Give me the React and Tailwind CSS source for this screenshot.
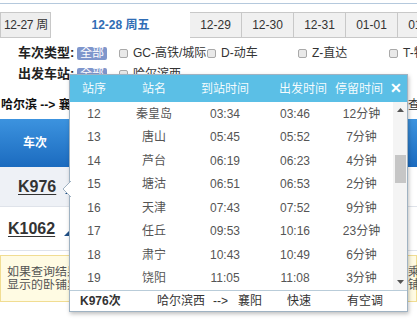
import React from 'react';

const STOPS = [
  ['12', '秦皇岛', '03:34', '03:46', '12分钟'],
  ['13', '唐山', '05:45', '05:52', '7分钟'],
  ['14', '芦台', '06:19', '06:23', '4分钟'],
  ['15', '塘沽', '06:51', '06:53', '2分钟'],
  ['16', '天津', '07:43', '07:52', '9分钟'],
  ['17', '任丘', '09:53', '10:16', '23分钟'],
  ['18', '肃宁', '10:43', '10:49', '6分钟'],
  ['19', '饶阳', '11:05', '11:08', '3分钟'],
];

const TABS = ['12-29', '12-30', '12-31', '01-01', '01-02'];

const Check = () => (
  <span className="inline-block w-[9px] h-[9px] rounded-[2px] border border-[#a9a9a9] bg-[#e9e9e9] shrink-0" />
);

const Option = ({ label, w }) => (
  <div className={`flex items-center gap-[5px] shrink-0 ${w}`}>
    <Check />
    <span className="text-[12px] text-[#333] whitespace-nowrap">{label}</span>
  </div>
);

const Badge = () => (
  <span className="inline-flex items-center justify-center w-[30px] h-[13px] rounded-[2px] bg-[#7f96cc] text-white text-[12px] leading-none shrink-0">
    全部
  </span>
);

const StopPopup = () => (
  <div className="absolute left-[69px] top-[74px] w-[339px] border border-[#9fb2c2] bg-white shadow-[1px_2px_4px_rgba(0,0,0,0.25)]">
    {/* little pointer on the left edge */}
    <svg className="absolute left-[-8px] top-[106px]" width="9" height="16" viewBox="0 0 9 16">
      <path d="M9 0 L1 8 L9 16 Z" fill="#fff" />
      <path d="M9 0 L1 8 L9 16" fill="none" stroke="#9fb2c2" />
    </svg>

    {/* header */}
    <div className="flex items-center h-[27px] bg-[#5bbfe6] text-[12px] text-white/95">
      <div className="w-[48px] text-center">站序</div>
      <div className="w-[72px] text-center">站名</div>
      <div className="w-[70px] text-center">到站时间</div>
      <div className="w-[70px] text-center pl-[16px]">出发时间</div>
      <div className="w-[58px] text-center">停留时间</div>
      <div className="w-[15px] text-center font-bold text-[14px] text-white">✕</div>
    </div>

    {/* body */}
    <div className="flex">
      <div className="w-[323px]">
        {STOPS.map(([no, name, arr, dep, stay]) => (
          <div key={no} className="flex items-center h-[23.5px] text-[12px] text-[#555]">
            <div className="w-[48px] text-center">{no}</div>
            <div className="w-[72px] text-center">{name}</div>
            <div className="w-[70px] text-center">{arr}</div>
            <div className="w-[70px] text-center">{dep}</div>
            <div className="w-[63px] text-center">{stay}</div>
          </div>
        ))}
      </div>
      <div className="w-[14px] bg-[#f4f4f4] flex flex-col items-center">
        <svg className="mt-[6px]" width="7" height="4" viewBox="0 0 7 4">
          <path d="M0 4 L3.5 0 L7 4 Z" fill="#555" />
        </svg>
        <div className="mt-[43px] w-[11px] h-[28px] bg-[#c6c6c6]" />
        <div className="flex-1" />
        <svg className="mb-[6px]" width="7" height="4" viewBox="0 0 7 4">
          <path d="M0 0 L3.5 4 L7 0 Z" fill="#555" />
        </svg>
      </div>
    </div>

    {/* footer */}
    <div className="flex items-center h-[21px] border-t border-[#b9ccd9] text-[12px] text-[#333] pl-[10px] whitespace-nowrap">
      <span className="w-[77px] font-bold">K976次</span>
      <span className="w-[56px]">哈尔滨西</span>
      <span className="w-[25px]">--&gt;</span>
      <span className="w-[49px]">襄阳</span>
      <span className="w-[60px]">快速</span>
      <span>有空调</span>
    </div>
  </div>
);

const TrainRow = ({ code, bg, pad, h }) => (
  <div className={`flex ${h} border-b border-[#dfe3ea]`}>
    <div className={`w-[70px] shrink-0 flex items-center ${bg} ${pad}`}>
      <span className="font-['Liberation_Sans',sans-serif] font-bold text-[16px] text-[#333] underline underline-offset-2">{code}</span>
      <svg className="ml-[9px] mt-[10px]" width="5" height="5" viewBox="0 0 5 5">
        <path d="M5 0 L5 5 L0 5 Z" fill="#1f4f86" />
      </svg>
    </div>
    <div className="flex-1 bg-white" />
  </div>
);

export default function App() {
  return (
    <div className="relative w-[417px] h-[326px] overflow-hidden bg-white font-['Liberation_Sans','Noto_Sans_CJK_SC',sans-serif] text-[#333]">
      <div className="h-[3px]" />
      <div className="h-px bg-[#b5c9dd]" />
      <div className="h-[8px]" />

      {/* date tabs */}
      <div className="flex h-[26px] text-[12px] whitespace-nowrap">
        <div className="w-[51px] shrink-0 bg-[#eeeeee] border border-[#c8c8c8] pl-[3px] flex items-center overflow-hidden tracking-[-0.3px]">12-27 周</div>
        <div className="w-[139px] shrink-0 bg-white flex items-center justify-center font-bold text-[#2f6db5]">12-28 周五</div>
        {TABS.map((t) => (
          <div key={t} className="w-[52px] shrink-0 bg-[#f0f0f0] border border-[#c8c8c8] border-l-0 first:border-l flex items-center justify-center">
            {t}
          </div>
        ))}
      </div>

      {/* filters */}
      <div className="pt-[8px] pl-[18px]">
        <div className="flex items-center h-[14px]">
          <span className="w-[59px] font-bold text-[13px] text-[#222] shrink-0">车次类型:</span>
          <Badge />
          <div className="w-[12px] shrink-0" />
          <Option label="GC-高铁/城际" w="w-[88px]" />
          <Option label="D-动车" w="w-[91px]" />
          <Option label="Z-直达" w="w-[91px]" />
          <Option label="T-特快" w="w-[60px]" />
        </div>
        <div className="flex items-center h-[14px] mt-[7px]">
          <span className="w-[59px] font-bold text-[13px] text-[#222] shrink-0">出发车站:</span>
          <Badge />
          <div className="w-[12px] shrink-0" />
          <Option label="哈尔滨西" w="w-[88px]" />
        </div>
      </div>

      {/* route line */}
      <div className="mt-[15px] flex items-center h-[18px] text-[12px] whitespace-nowrap">
        <div className="w-[408px] shrink-0 pl-[1px] font-bold text-[#111] overflow-hidden">哈尔滨 --&gt; 襄阳（12月28日 周五）共计2个车次</div>
        <div className="text-[#333]">查询</div>
      </div>

      {/* table header */}
      <div className="mt-[5px] flex h-[48px] bg-gradient-to-b from-[#3c93df] to-[#1b6bbf] text-white font-bold text-[12px]">
        <div className="w-[70px] flex items-center justify-center">车次</div>
      </div>

      <TrainRow code="K976" bg="bg-[#eef1f6]" pad="pl-[18px]" h="h-[40px]" />
      <TrainRow code="K1062" bg="bg-white" pad="pl-[8px]" h="h-[44px]" />

      {/* notice */}
      <div className="mt-[4px] h-[47px] bg-[#fffbe3] border border-[#f1dd92] pt-[10px] pl-[6px] text-[12px] leading-[13px] text-[#555] whitespace-nowrap">
        <div className="flex">
          <div className="w-[401px] shrink-0 overflow-hidden">如果查询结果中没有满足需求的车次，您还可以使用</div>
          <div>乘车</div>
        </div>
        <div className="flex">
          <div className="w-[401px] shrink-0 overflow-hidden">显示的卧铺票价均为上铺票价，供您参考。具体票价以您确认支付时实际购买的铺别票价为准。</div>
          <div>铺别</div>
        </div>
      </div>

      <StopPopup />
    </div>
  );
}
